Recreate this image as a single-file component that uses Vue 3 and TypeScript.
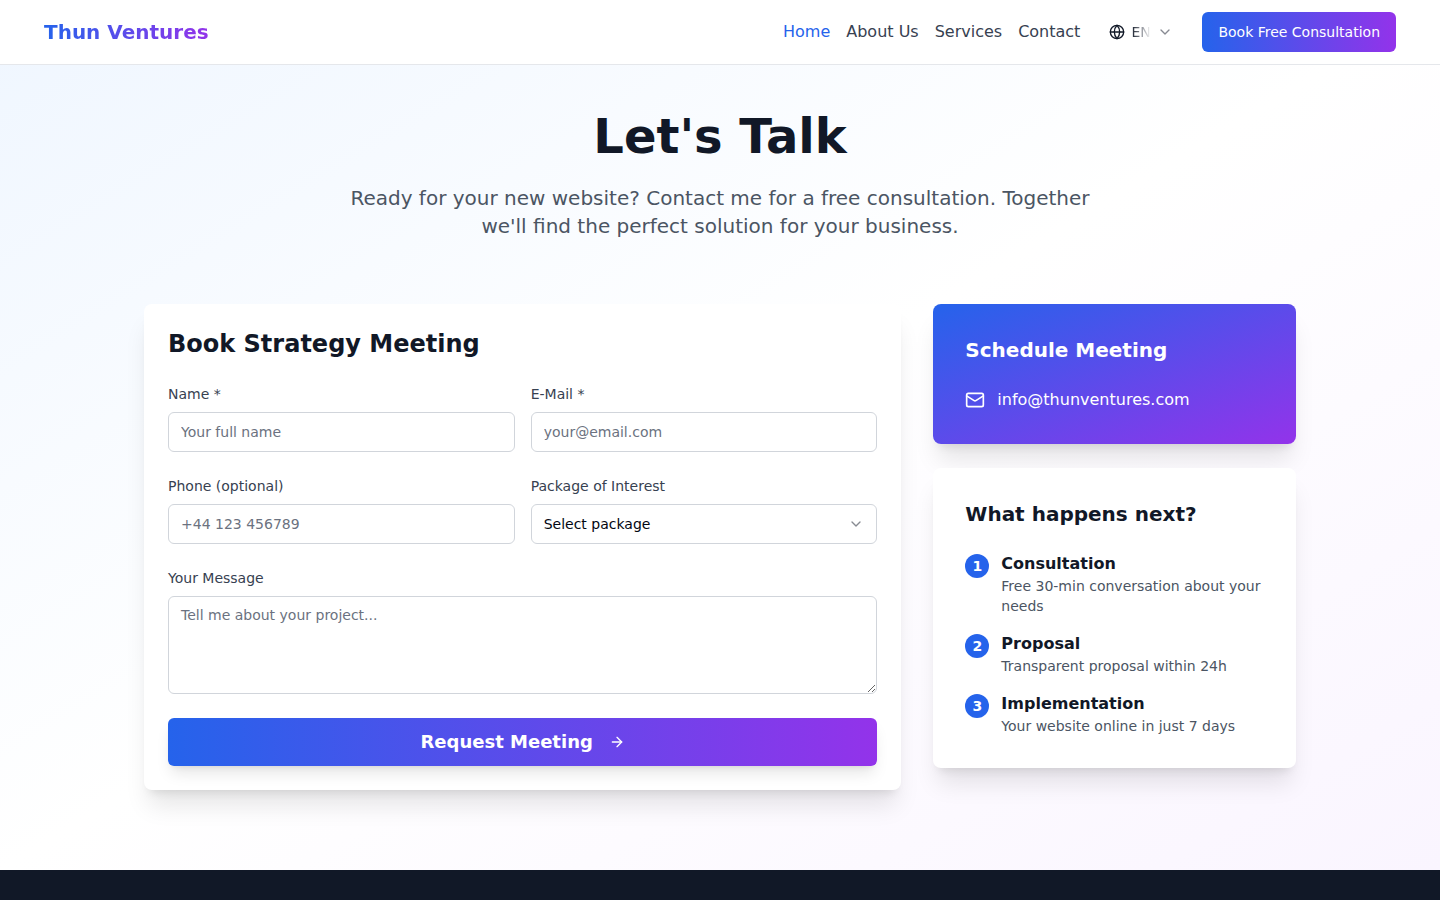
<script setup lang="ts">
import { reactive, ref } from 'vue'

interface NavItem {
  label: string
  href: string
  active?: boolean
}

interface Step {
  title: string
  text: string
}

const navItems: NavItem[] = [
  { label: 'Home', href: '#home', active: true },
  { label: 'About Us', href: '#about' },
  { label: 'Services', href: '#services' },
  { label: 'Contact', href: '#contact' },
]

const steps: Step[] = [
  { title: 'Consultation', text: 'Free 30-min conversation about your needs' },
  { title: 'Proposal', text: 'Transparent proposal within 24h' },
  { title: 'Implementation', text: 'Your website online in just 7 days' },
]

const language = ref('EN')
const form = reactive({ name: '', email: '', phone: '', plan: '', message: '' })
</script>

<template>
  <div class="page">
    <header class="site-header">
      <div class="header-inner">
        <a class="logo" href="#home">Thun Ventures</a>
        <div class="header-right">
          <nav class="nav" aria-label="Main">
            <a
              v-for="item in navItems"
              :key="item.label"
              :href="item.href"
              :class="{ active: item.active }"
            >{{ item.label }}</a>
          </nav>
          <div class="language">
            <svg class="icon-16" viewBox="0 0 24 24" aria-hidden="true">
              <circle cx="12" cy="12" r="10" />
              <path d="M12 2a14.5 14.5 0 0 0 0 20 14.5 14.5 0 0 0 0-20" />
              <path d="M2 12h20" />
            </svg>
            <select v-model="language" aria-label="Language">
              <option value="EN">EN</option>
            </select>
            <svg class="icon-16 chevron" viewBox="0 0 24 24" aria-hidden="true">
              <path d="m6 9 6 6 6-6" />
            </svg>
          </div>
          <button class="cta" type="button">Book Free Consultation</button>
        </div>
      </div>
    </header>

    <main class="main">
      <div class="intro">
        <h1>Let's Talk</h1>
        <p>
          Ready for your new website? Contact me for a free consultation. Together we'll find the
          perfect solution for your business.
        </p>
      </div>

      <div class="columns">
        <section class="card form-card">
          <h2>Book Strategy Meeting</h2>
          <form @submit.prevent>
            <div class="field">
              <label for="name">Name *</label>
              <input id="name" v-model="form.name" class="control" type="text" placeholder="Your full name" />
            </div>
            <div class="field">
              <label for="email">E-Mail *</label>
              <input id="email" v-model="form.email" class="control" type="email" placeholder="your@email.com" />
            </div>
            <div class="field">
              <label for="phone">Phone (optional)</label>
              <input id="phone" v-model="form.phone" class="control" type="tel" placeholder="+44 123 456789" />
            </div>
            <div class="field">
              <label for="plan">Package of Interest</label>
              <div class="select-wrap">
                <select id="plan" v-model="form.plan" class="control">
                  <option value="">Select package</option>
                </select>
                <svg class="icon-16 chevron" viewBox="0 0 24 24" aria-hidden="true">
                  <path d="m6 9 6 6 6-6" />
                </svg>
              </div>
            </div>
            <div class="field wide">
              <label for="message">Your Message</label>
              <textarea
                id="message"
                v-model="form.message"
                class="control"
                rows="4"
                placeholder="Tell me about your project..."
              ></textarea>
            </div>
            <button class="submit wide" type="submit">
              Request Meeting
              <svg class="icon-16" viewBox="0 0 24 24" aria-hidden="true">
                <path d="M5 12h14" />
                <path d="m12 5 7 7-7 7" />
              </svg>
            </button>
          </form>
        </section>

        <aside class="side">
          <section class="card side-card schedule">
            <h3>Schedule Meeting</h3>
            <a class="mail" href="mailto:info@thunventures.com">
              <svg class="icon-20" viewBox="0 0 24 24" aria-hidden="true">
                <rect x="2" y="4" width="20" height="16" rx="2" />
                <path d="m22 7-8.97 5.7a1.94 1.94 0 0 1-2.06 0L2 7" />
              </svg>
              <span>info@thunventures.com</span>
            </a>
          </section>

          <section class="card side-card">
            <h3>What happens next?</h3>
            <ol class="steps">
              <li v-for="(step, index) in steps" :key="step.title">
                <span class="number">{{ index + 1 }}</span>
                <div>
                  <h4>{{ step.title }}</h4>
                  <p>{{ step.text }}</p>
                </div>
              </li>
            </ol>
          </section>
        </aside>
      </div>
    </main>

    <footer class="footer"></footer>
  </div>
</template>

<style>
body {
  margin: 0;
}
</style>

<style scoped>
.page,
.page * {
  box-sizing: border-box;
}

.page {
  --brand: linear-gradient(to right, #2563eb, #9333ea);
  display: flex;
  flex-direction: column;
  min-height: 100vh;
  color: #111827;
  font-family: "DejaVu Sans", sans-serif;
  font-size: 16px;
  line-height: 24px;
}

h1,
h2,
h3,
h4,
p,
ol {
  margin: 0;
  padding: 0;
}

a {
  color: inherit;
  text-decoration: none;
}

button,
input,
select,
textarea {
  font-family: inherit;
}

svg {
  flex-shrink: 0;
  fill: none;
  stroke: currentColor;
  stroke-width: 2;
  stroke-linecap: round;
  stroke-linejoin: round;
}

.icon-16 {
  width: 16px;
  height: 16px;
}

.icon-20 {
  width: 20px;
  height: 20px;
}

.chevron {
  opacity: 0.5;
  pointer-events: none;
}

.site-header {
  position: fixed;
  top: 0;
  left: 0;
  right: 0;
  z-index: 10;
  background: #fff;
  border-bottom: 1px solid #e5e7eb;
}

.header-inner {
  display: flex;
  align-items: center;
  justify-content: space-between;
  height: 64px;
  max-width: 1400px;
  margin: 0 auto;
  padding: 0 24px;
}

.logo {
  background: linear-gradient(to right, #2563eb, #9333ea);
  background-clip: text;
  -webkit-background-clip: text;
  color: transparent;
  font-size: 20px;
  font-weight: 700;
  line-height: 28px;
}

.header-right,
.nav {
  display: flex;
  align-items: center;
  gap: 16px;
}

.nav {
  color: #374151;
}

.nav .active {
  color: #2563eb;
}

.language {
  display: flex;
  align-items: center;
  gap: 6px;
  width: 90px;
  height: 40px;
  padding: 0 13px;
}

.language select {
  flex: 1;
  min-width: 0;
  padding: 0;
  border: 0;
  appearance: none;
  background: transparent;
  color: #111827;
  font-size: 14px;
  line-height: 20px;
  mask-image: linear-gradient(to right, #000, transparent);
}

.cta {
  height: 40px;
  padding: 0 16px;
  border: 0;
  border-radius: 6px;
  background: var(--brand);
  color: #fff;
  font-size: 14px;
  font-weight: 500;
  line-height: 20px;
}

.main {
  padding: 112px 24px 80px;
  background: linear-gradient(to bottom right, #eff6ff, #fff, #faf5ff);
}

.intro {
  max-width: 768px;
  margin: 0 auto 64px;
  text-align: center;
}

h1 {
  margin-bottom: 24px;
  font-size: 48px;
  font-weight: 700;
  line-height: 48px;
}

.intro p {
  color: #4b5563;
  font-size: 20px;
  line-height: 28px;
}

.columns {
  display: grid;
  grid-template-columns: repeat(3, minmax(0, 1fr));
  align-items: start;
  gap: 32px;
  max-width: 1152px;
  margin: 0 auto;
}

.card {
  border-radius: 8px;
  background: #fff;
  box-shadow: 0 20px 25px -5px rgb(0 0 0 / 0.1), 0 8px 10px -6px rgb(0 0 0 / 0.1);
}

.form-card {
  grid-column: span 2;
  padding: 24px;
}

h2 {
  margin-bottom: 24px;
  font-size: 24px;
  font-weight: 600;
  line-height: 32px;
}

form {
  display: grid;
  grid-template-columns: repeat(2, minmax(0, 1fr));
  gap: 24px 16px;
}

.wide {
  grid-column: 1 / -1;
}

.field {
  display: grid;
  gap: 8px;
}

label {
  color: #374151;
  font-size: 14px;
  font-weight: 500;
  line-height: 20px;
}

.control {
  display: block;
  width: 100%;
  height: 40px;
  padding: 8px 12px;
  border: 1px solid #d1d5db;
  border-radius: 6px;
  background: #fff;
  color: #030712;
  font-size: 14px;
  line-height: 20px;
}

.control::placeholder {
  color: #6b7280;
  opacity: 1;
}

textarea.control {
  height: auto;
  resize: vertical;
}

.select-wrap {
  display: grid;
  align-items: center;
}

.select-wrap > * {
  grid-area: 1 / 1;
}

.select-wrap select {
  appearance: none;
}

.select-wrap .chevron {
  justify-self: end;
  margin-right: 13px;
}

.submit {
  display: flex;
  align-items: center;
  justify-content: center;
  gap: 16px;
  height: 48px;
  border: 0;
  border-radius: 6px;
  background: var(--brand);
  box-shadow: 0 10px 15px -3px rgb(0 0 0 / 0.1), 0 4px 6px -4px rgb(0 0 0 / 0.1);
  color: #fff;
  font-size: 18px;
  font-weight: 600;
  line-height: 28px;
}

.side {
  display: grid;
  gap: 24px;
}

.side-card {
  padding: 32px;
}

.schedule {
  background: linear-gradient(to bottom right, #2563eb, #9333ea);
  color: #fff;
}

h3 {
  margin-bottom: 24px;
  font-size: 20px;
  font-weight: 700;
  line-height: 28px;
}

.mail {
  display: flex;
  align-items: center;
  gap: 12px;
}

.steps {
  display: grid;
  gap: 16px;
  list-style: none;
}

.steps li {
  display: flex;
  align-items: flex-start;
  gap: 12px;
}

.number {
  display: flex;
  flex-shrink: 0;
  align-items: center;
  justify-content: center;
  width: 24px;
  height: 24px;
  margin-top: 2px;
  border-radius: 50%;
  background: #2563eb;
  color: #fff;
  font-size: 14px;
  font-weight: 700;
  line-height: 20px;
}

h4 {
  font-size: 16px;
  font-weight: 600;
  line-height: 24px;
}

.steps p {
  color: #4b5563;
  font-size: 14px;
  line-height: 20px;
}

.footer {
  flex: 1;
  background: #111827;
}
</style>
